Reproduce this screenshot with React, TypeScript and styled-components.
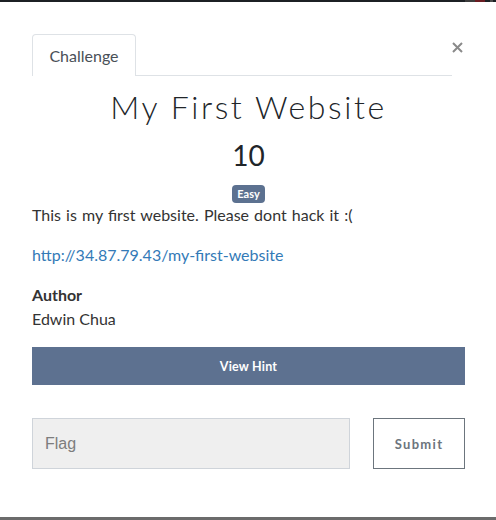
import React from "react";
import styled, { createGlobalStyle } from "styled-components";

const Global = createGlobalStyle`
  html, body { margin: 0; padding: 0; background: #fff; }
  body { font-family: Lato, "Open Sans", sans-serif; }
  * { box-sizing: border-box; }
`;

const Frame = styled.div`
  width: 496px;
  height: 520px;
  display: flex;
  flex-direction: column;
  border-bottom: 3px solid #6b6b6b;
  background: #fff;
`;

const TopBar = styled.div`
  height: 2px;
  background: #1c2024;
  display: flex;
  justify-content: flex-end;
`;

const BarMark = styled.span<{ $c: string; $w: number }>`
  width: ${(p) => p.$w}px;
  height: 2px;
  background: ${(p) => p.$c};
`;

const Body = styled.div`
  padding: 32px 31px 0 32px;
  display: flex;
  flex-direction: column;
`;

const Header = styled.div`
  display: flex;
  align-items: flex-start;
`;

const Tabs = styled.div`
  flex: 1;
  display: flex;
  border-bottom: 1px solid #dee2e6;
`;

const Tab = styled.div`
  height: 42px;
  width: 104px;
  border: 1px solid #dee2e6;
  border-bottom: none;
  border-radius: 4px 4px 0 0;
  margin-bottom: -1px;
  background: #fff;
  display: flex;
  align-items: center;
  justify-content: center;
  padding-bottom: 1px;
  font-size: 16px;
  color: #495057;
`;

const Close = styled.button`
  width: 13px;
  height: 13px;
  margin-top: 7px;
  padding: 0;
  border: none;
  background: none;
  display: flex;
  align-items: center;
  justify-content: flex-start;
  color: #8a8a8a;
`;

const Title = styled.h2`
  margin: 13px 0 0;
  font-size: 32px;
  line-height: 36px;
  font-weight: 300;
  letter-spacing: 2.6px;
  text-align: center;
  color: #212529;
`;

const Points = styled.div`
  margin-top: 13px;
  font-size: 28px;
  line-height: 34px;
  font-weight: 400;
  text-align: center;
  color: #212529;
`;

const BadgeRow = styled.div`
  margin-top: 13px;
  display: flex;
  justify-content: center;
`;

const Badge = styled.span`
  height: 18px;
  padding: 0 5px;
  border-radius: 4px;
  background: #5c7190;
  color: #fff;
  font-size: 11px;
  font-weight: 700;
  line-height: 18px;
`;

const Text = styled.p<{ $mt?: number }>`
  margin: ${(p) => p.$mt ?? 0}px 0 0;
  font-size: 16px;
  line-height: 24px;
  word-spacing: 1px;
  color: #333;
`;

const Link = styled.a`
  color: #337ab7;
  text-decoration: none;
`;

const Label = styled.div<{ $mt?: number; $bold?: boolean }>`
  margin-top: ${(p) => p.$mt ?? 0}px;
  font-size: 16px;
  line-height: 24px;
  font-weight: ${(p) => (p.$bold ? 700 : 400)};
  color: #333;
`;

const HintButton = styled.button`
  margin-top: 16px;
  height: 38px;
  width: 100%;
  border: none;
  background: #5d7190;
  color: #fff;
  font-family: Lato, sans-serif;
  font-size: 12.5px;
  font-weight: 700;
  letter-spacing: 0.2px;
`;

const FormRow = styled.div`
  margin-top: 33px;
  display: flex;
  align-items: flex-start;
`;

const FlagInput = styled.input`
  flex: 0 0 318px;
  width: 318px;
  height: 51px;
  border: 1px solid #cfd4da;
  background: #efefef;
  padding: 0 12px;
  font-family: "Liberation Sans", Arial, sans-serif;
  font-size: 16px;
  color: #333;
  &::placeholder { color: #7d7d7d; }
`;

const SubmitButton = styled.button`
  flex: 0 0 92px;
  margin-left: 23px;
  width: 92px;
  height: 51px;
  border: 1px solid #6c757d;
  background: #fff;
  color: #6c757d;
  font-family: Lato, sans-serif;
  font-size: 13px;
  font-weight: 700;
  letter-spacing: 1.3px;
`;

export default function App() {
  return (
    <>
      <Global />
      <Frame>
        <TopBar>
          <BarMark $c="#3c3c3c" $w={10} />
          <BarMark $c="#6a1c22" $w={10} />
          <BarMark $c="#1c2024" $w={5} />
          <BarMark $c="#4a4a4a" $w={3} />
          <BarMark $c="#1c2024" $w={3} />
        </TopBar>
        <Body>
          <Header>
            <Tabs>
              <Tab>Challenge</Tab>
            </Tabs>
            <Close aria-label="Close">
              <svg width="11" height="11" viewBox="0 0 11 11">
                <path d="M1 1 L10 10 M10 1 L1 10" stroke="currentColor" strokeWidth="2" />
              </svg>
            </Close>
          </Header>
          <Title>My First Website</Title>
          <Points>10</Points>
          <BadgeRow>
            <Badge>Easy</Badge>
          </BadgeRow>
          <Text>This is my first website. Please dont hack it :(</Text>
          <Text $mt={16}>
            <Link href="#">http://34.87.79.43/my-first-website</Link>
          </Text>
          <Label $mt={16} $bold>Author</Label>
          <Label>Edwin Chua</Label>
          <HintButton>View Hint</HintButton>
          <FormRow>
            <FlagInput placeholder="Flag" />
            <SubmitButton>Submit</SubmitButton>
          </FormRow>
        </Body>
      </Frame>
    </>
  );
}
